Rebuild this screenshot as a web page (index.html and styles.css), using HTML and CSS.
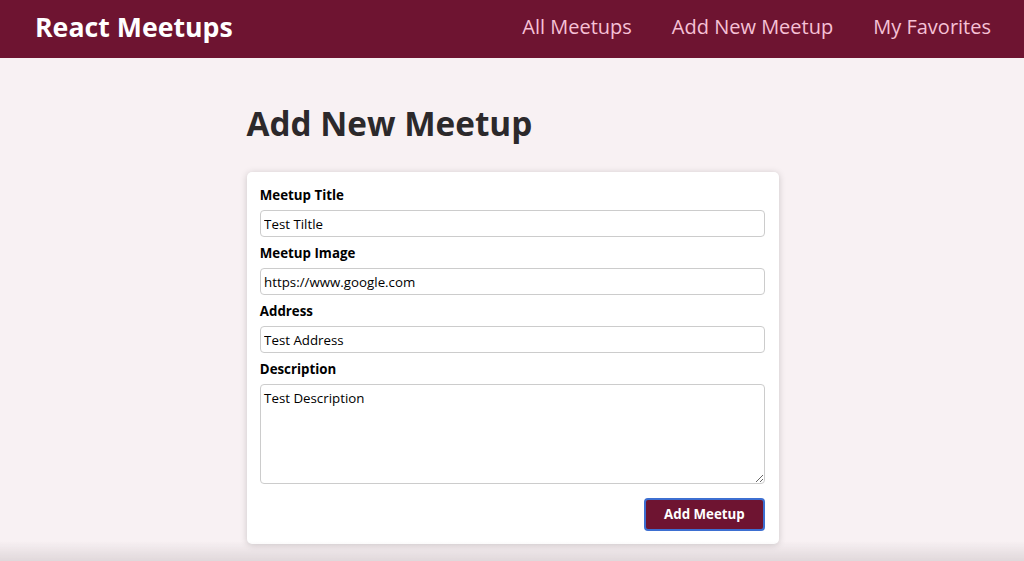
FILE: index.html
```html
<!DOCTYPE html>
<html lang="en">
<head>
<meta charset="utf-8">
<title>React Meetups</title>
<link rel="stylesheet" href="styles.css">
</head>
<body>
<header class="header">
  <div class="logo">React Meetups</div>
  <nav>
    <ul class="nav-list">
      <li><a href="#">All Meetups</a></li>
      <li><a href="#">Add New Meetup</a></li>
      <li><a href="#">My Favorites</a></li>
    </ul>
  </nav>
</header>
<main class="main">
  <h1 class="page-title">Add New Meetup</h1>
  <div class="card">
    <form class="form">
      <div class="control">
        <label for="title">Meetup Title</label>
        <input type="text" id="title" value="Test Tiltle">
      </div>
      <div class="control">
        <label for="image">Meetup Image</label>
        <input type="url" id="image" value="https://www.google.com">
      </div>
      <div class="control">
        <label for="address">Address</label>
        <input type="text" id="address" value="Test Address">
      </div>
      <div class="control">
        <label for="description">Description</label>
        <textarea id="description" rows="5">Test Description</textarea>
      </div>
      <div class="actions">
        <button type="button" class="btn">Add Meetup</button>
      </div>
    </form>
  </div>
</main>
<div class="bottom-shade"></div>
</body>
</html>
```
FILE: styles.css
```css
* { box-sizing: border-box; }

html, body {
  margin: 0;
  padding: 0;
}

body {
  font-family: "Open Sans", "Liberation Sans", sans-serif;
  background: #f8f1f3;
  min-height: 100vh;
}

.header {
  height: 58px;
  background: #6e1431;
  display: flex;
  align-items: center;
  justify-content: space-between;
  padding: 0 33px 5px 35px;
}

.logo {
  color: #ffffff;
  font-size: 26.7px;
  font-weight: 700;
}

.nav-list {
  list-style: none;
  margin: 0;
  padding: 0;
  display: flex;
  align-items: baseline;
  gap: 40px;
}

.nav-list a {
  color: #f6c1d6;
  text-decoration: none;
  font-size: 20px;
}

.main {
  width: 533px;
  margin: 0 auto;
  padding: 43px 0 0 1px;
}

.page-title {
  margin: 0 0 26px;
  font-size: 33.3px;
  font-weight: 700;
  color: #2c292b;
  line-height: 1.362;
}

.card {
  background: #ffffff;
  border-radius: 5px;
  box-shadow: 0 1px 7px rgba(0, 0, 0, 0.18);
  padding: 13.3px;
}

.control {
  margin-bottom: 6.7px;
}

.control label {
  display: block;
  font-weight: 700;
  font-size: 13.3px;
  line-height: 18px;
  margin-bottom: 6.7px;
  color: #000;
}

.control input,
.control textarea {
  display: block;
  width: 100%;
  font: inherit;
  font-size: 13.3px;
  line-height: 18px;
  padding: 3.3px;
  border: 1px solid #cccccc;
  border-radius: 4px;
  background: #fff;
  color: #000;
}

.control textarea {
  height: 100px;
  resize: vertical;
}

.actions {
  margin-top: 13.3px;
  display: flex;
  justify-content: flex-end;
}

.btn {
  font: inherit;
  font-size: 13.3px;
  font-weight: 700;
  line-height: 18px;
  white-space: nowrap;
  color: #ffffff;
  background: #6e1431;
  border: 2px solid #3d6fd1;
  border-radius: 4px;
  padding: 5.6px 18.5px;
  cursor: pointer;
}

.bottom-shade {
  position: fixed;
  left: 0;
  right: 0;
  bottom: 0;
  height: 20px;
  background: linear-gradient(to bottom, rgba(180, 170, 175, 0) 0%, rgba(180, 170, 175, 0.35) 100%);
  pointer-events: none;
}
```
